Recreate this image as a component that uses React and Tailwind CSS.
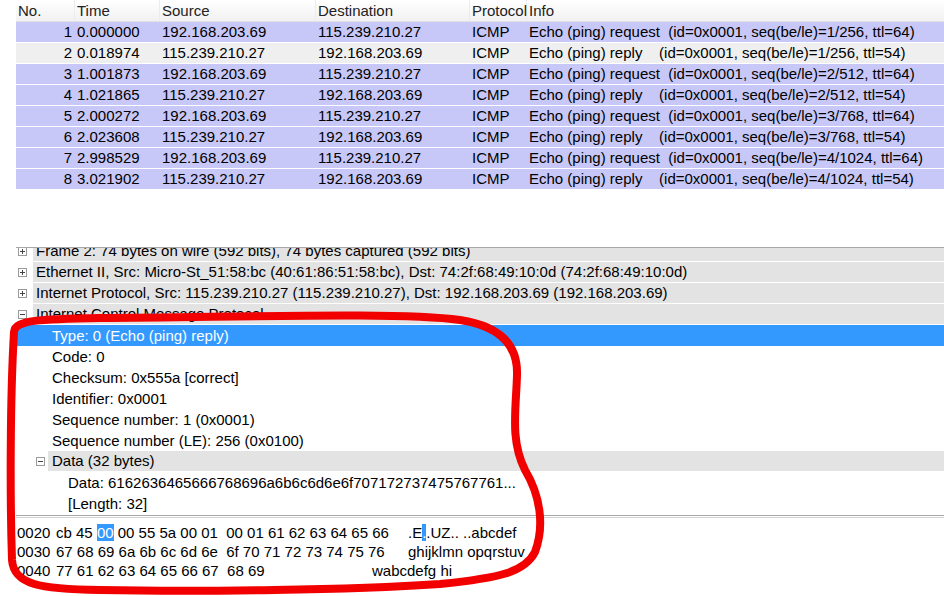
import React from 'react';

const packets = [
  { no: 1, time: '0.000000', src: '192.168.203.69', dst: '115.239.210.27', info: 'Echo (ping) request  (id=0x0001, seq(be/le)=1/256, ttl=64)' },
  { no: 2, time: '0.018974', src: '115.239.210.27', dst: '192.168.203.69', info: 'Echo (ping) reply    (id=0x0001, seq(be/le)=1/256, ttl=54)', selected: true },
  { no: 3, time: '1.001873', src: '192.168.203.69', dst: '115.239.210.27', info: 'Echo (ping) request  (id=0x0001, seq(be/le)=2/512, ttl=64)' },
  { no: 4, time: '1.021865', src: '115.239.210.27', dst: '192.168.203.69', info: 'Echo (ping) reply    (id=0x0001, seq(be/le)=2/512, ttl=54)' },
  { no: 5, time: '2.000272', src: '192.168.203.69', dst: '115.239.210.27', info: 'Echo (ping) request  (id=0x0001, seq(be/le)=3/768, ttl=64)' },
  { no: 6, time: '2.023608', src: '115.239.210.27', dst: '192.168.203.69', info: 'Echo (ping) reply    (id=0x0001, seq(be/le)=3/768, ttl=54)' },
  { no: 7, time: '2.998529', src: '192.168.203.69', dst: '115.239.210.27', info: 'Echo (ping) request  (id=0x0001, seq(be/le)=4/1024, ttl=64)' },
  { no: 8, time: '3.021902', src: '115.239.210.27', dst: '192.168.203.69', info: 'Echo (ping) reply    (id=0x0001, seq(be/le)=4/1024, ttl=54)' },
];

const Expander = ({ open }) => (
  <svg width="9" height="9" viewBox="0 0 9 9" className="shrink-0">
    <rect x="0.5" y="0.5" width="8" height="8" fill="#fff" stroke="#9a9a9a" />
    <line x1="2" y1="4.5" x2="7" y2="4.5" stroke="#444" />
    {!open && <line x1="4.5" y1="2" x2="4.5" y2="7" stroke="#444" />}
  </svg>
);

const TopRow = ({ text, open }) => (
  <div className="flex h-[21px] border-b border-white">
    <div className="w-[17px] flex items-center pl-[2px] bg-white">
      <Expander open={open} />
    </div>
    <div className="flex-1 bg-[#e3e3e3] pl-[3px] leading-[20px] whitespace-nowrap">{text}</div>
  </div>
);

const Child = ({ text, indent = 'pl-[36px]' }) => (
  <div className={`h-[21px] leading-[21px] whitespace-nowrap ${indent}`}>{text}</div>
);

const hexRows = [
  { off: '0020', g1: ['cb', '45', '00', '00', '55', '5a', '00', '01'], g2: '00 01 61 62 63 64 65 66', a: ['.E', '.', '.UZ.. ..abcdef'], hexW: 'w-[352px]' },
  { off: '0030', g1: ['67', '68', '69', '6a', '6b', '6c', '6d', '6e'], g2: '6f 70 71 72 73 74 75 76', a: ['ghijklmn opqrstuv'], hexW: 'w-[352px]' },
  { off: '0040', g1: ['77', '61', '62', '63', '64', '65', '66', '67'], g2: '68 69', a: ['wabcdefg hi'], hexW: 'w-[316px]' },
];

export default function App() {
  return (
    <div className="relative w-[944px] h-[596px] overflow-hidden bg-white text-black text-[15px] font-['Liberation_Sans',Arial,sans-serif]">
      {/* packet list */}
      <div className="h-[247px] pl-[16px]">
        <div className="flex h-[22px] leading-[21px] text-[#222] bg-gradient-to-b from-white to-[#f1f1f1] border-b border-[#e2e2e2]">
          <div className="w-[59px] pl-[2px] border-r border-[#ececec]">No.</div>
          <div className="w-[85px] pl-[2px] border-r border-[#ececec]">Time</div>
          <div className="w-[156px] pl-[2px] border-r border-[#ececec]">Source</div>
          <div className="w-[154px] pl-[2px] border-r border-[#ececec]">Destination</div>
          <div className="w-[57px] pl-[2px] border-r border-[#ececec]">Protocol</div>
          <div className="flex-1 pl-[2px]">Info</div>
        </div>
        {packets.map((p) => (
          <div
            key={p.no}
            className={`flex h-[21px] leading-[20px] border-b border-white whitespace-pre ${p.selected ? 'bg-[#efefef]' : 'bg-[#c8c8f8]'}`}
          >
            <div className="w-[59px] text-right pr-[3px]">{p.no}</div>
            <div className="w-[85px] pl-[2px]">{p.time}</div>
            <div className="w-[156px] pl-[2px]">{p.src}</div>
            <div className="w-[154px] pl-[2px]">{p.dst}</div>
            <div className="w-[57px] pl-[2px]">ICMP</div>
            <div className="flex-1 pl-[2px]">{p.info}</div>
          </div>
        ))}
      </div>

      {/* packet details */}
      <div className="ml-[16px] h-[269px] overflow-hidden border-t border-b border-[#a8a8a8]">
        <div className="mt-[-7px]">
          <TopRow text="Frame 2: 74 bytes on wire (592 bits), 74 bytes captured (592 bits)" />
          <TopRow text="Ethernet II, Src: Micro-St_51:58:bc (40:61:86:51:58:bc), Dst: 74:2f:68:49:10:0d (74:2f:68:49:10:0d)" />
          <TopRow text="Internet Protocol, Src: 115.239.210.27 (115.239.210.27), Dst: 192.168.203.69 (192.168.203.69)" />
          <TopRow text="Internet Control Message Protocol" open />
          <div className="h-[21px] leading-[21px] pl-[36px] bg-[#3399ff] text-white">Type: 0 (Echo (ping) reply)</div>
          <Child text="Code: 0" />
          <Child text="Checksum: 0x555a [correct]" />
          <Child text="Identifier: 0x0001" />
          <Child text="Sequence number: 1 (0x0001)" />
          <Child text="Sequence number (LE): 256 (0x0100)" />
          <div className="flex h-[21px] border-b border-white">
            <div className="w-[32px] flex items-center justify-end pr-[3px] bg-white">
              <Expander open />
            </div>
            <div className="flex-1 bg-[#e3e3e3] pl-[4px] leading-[20px]">Data (32 bytes)</div>
          </div>
          <Child text="Data: 6162636465666768696a6b6c6d6e6f707172737475767761..." indent="pl-[52px]" />
          <Child text="[Length: 32]" indent="pl-[52px]" />
        </div>
      </div>

      {/* bytes pane */}
      <div className="ml-[16px] mt-px border-t border-[#d4d4d4] pt-[5px]">
        {hexRows.map((r, i) => (
          <div key={r.off} className="flex h-[19px] leading-[19px] whitespace-pre">
            <div className="w-[40px] pl-px">{r.off}</div>
            <div className={`${r.hexW} flex`}>
              <span>
                {r.g1.map((b, j) => (
                  <span key={j}>
                    {i === 0 && j === 2 ? <span className="bg-[#3399ff] text-white">{b}</span> : b}
                    {j < 7 ? ' ' : ''}
                  </span>
                ))}
              </span>
              <span>{'  ' + r.g2}</span>
            </div>
            <div>
              {r.a.length === 3 ? (
                <>
                  {r.a[0]}
                  <span className="bg-[#3399ff] text-white">{r.a[1]}</span>
                  {r.a[2]}
                </>
              ) : (
                r.a[0]
              )}
            </div>
          </div>
        ))}
      </div>

      {/* hand-drawn red annotation */}
      <svg className="absolute left-0 top-0 pointer-events-none" width="944" height="596" viewBox="0 0 944 596">
        <path
          d="M 14 332 C 15 320, 40 319, 100 318 C 250 317, 400 312, 460 320 C 500 326, 518 345, 517 375 C 516 410, 510 440, 525 470 C 540 495, 545 525, 535 552 C 525 572, 500 578, 440 584 C 350 590, 200 592, 100 590 C 40 589, 14 585, 12 560 C 10 500, 10 400, 14 332 Z"
          fill="none"
          stroke="#f20000"
          strokeWidth="8"
          strokeLinejoin="round"
          strokeLinecap="round"
        />
      </svg>
    </div>
  );
}
